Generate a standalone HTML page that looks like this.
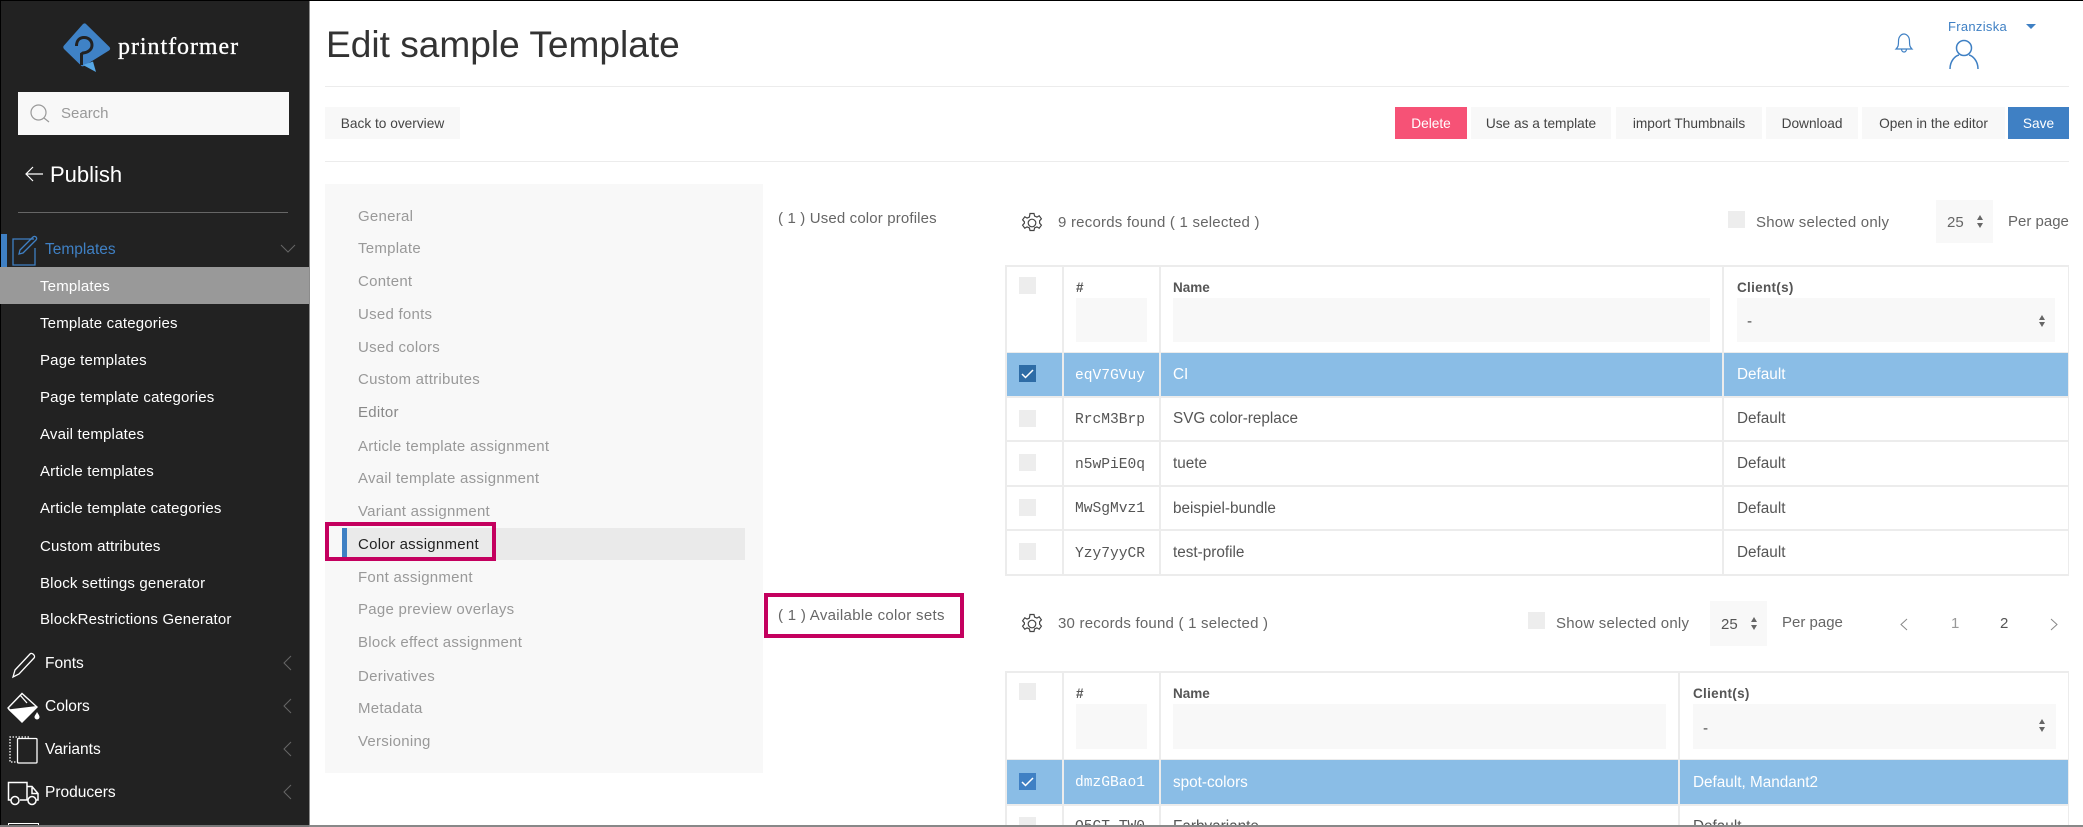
<!DOCTYPE html>
<html><head><meta charset="utf-8"><title>Edit sample Template</title>
<style>
html,body{margin:0;padding:0;background:#fff}
#p{position:relative;width:2083px;height:827px;overflow:hidden;background:#fff;font-family:"Liberation Sans",sans-serif;color:#555}
#p div,#p svg{position:absolute}
.t{white-space:nowrap;line-height:20px;height:20px;margin-top:1px}
.s{color:#fff;font-size:15px;left:40px;letter-spacing:.18px}
.m{color:#fff;font-size:15.5px;left:45px}
.n{color:#999;font-size:15px;left:358px;letter-spacing:.26px}
.b{top:107px;height:32px;line-height:34px;background:#f8f8f8;color:#444;font-size:13.7px;text-align:center;white-space:nowrap}
.l{background:#ececec}
.cb{width:17px;height:17px;background:#ededed}
.mono{font-family:"Liberation Mono",monospace;font-size:14.6px;color:#555}
.c{font-size:15.3px;color:#555}
.h{font-size:13.5px;font-weight:bold;color:#555}
.f{background:#f8f8f8}
.w{color:#fff}
.sel{background:#8abde6}
#p .n,#p .s,#p .c,#p .mono,#p .h,#p .k{margin-top:2px}
</style></head><body><div id="p">

<!-- sidebar -->
<div style="left:0;top:0;width:309px;height:827px;background:#222"></div>
<div style="left:0;top:0;width:1px;height:827px;background:#000"></div>
<div style="left:309px;top:0;width:1px;height:825px;background:#8c8c8c"></div>
<svg style="left:60px;top:20px" width="55" height="55" viewBox="60 20 55 55">
<path d="M84 23.500 Q85 23 86 24 L109.500 47 Q111 49 109 50.500 L84 66 Q82 67 81 65.500 L64 49 Q62.500 47 64 45.500 L83 24 Z" fill="#3f82c6"/>
<path d="M83 65 L93 61.500 L96 72 Z" fill="#56a7e6"/>
<path d="M76.500 46 C76.500 40 80 37.500 84 37.500 C89.500 37.500 92 41.500 92 45 C92 50 87.500 52.500 83 53 L81.500 54 V65" fill="none" stroke="#222" stroke-width="3"/>
</svg>
<div class="t" style="left:118px;top:33px;height:26px;line-height:26px;font-family:'Liberation Serif',serif;font-size:24px;color:#fff;letter-spacing:.95px;-webkit-text-stroke:.3px #fff">printformer</div>
<div style="left:18px;top:92px;width:271px;height:43px;background:#f8f8f8"></div>
<svg style="left:28px;top:102px" width="24" height="24" viewBox="0 0 24 24" fill="none" stroke="#999" stroke-width="1.2"><circle cx="10.500" cy="10.500" r="7.500"/><path d="M16 16l5 4"/></svg>
<div class="t" style="left:61px;top:103px;font-size:15px;color:#999">Search</div>
<svg style="left:24px;top:163px" width="22" height="22" viewBox="0 0 22 22" fill="none" stroke="#fff" stroke-width="1.2"><path d="M19 11H2M9 4l-7 7 7 7"/></svg>
<div class="t" style="left:50px;top:164px;font-size:22px;color:#fff;line-height:20px">Publish</div>
<div style="left:18px;top:212px;width:270px;height:1px;background:#666"></div>

<div style="left:1px;top:234px;width:6px;height:33px;background:#3f80c4"></div>
<svg style="left:11px;top:234px" width="30" height="33" viewBox="0 0 30 33" fill="none" stroke="#3f80c4" stroke-width="1.3"><path d="M23 5H2v26h22V14"/><path d="M8 20l1-4L22 3c2-2 5 1 3 3L12 19z"/></svg>
<div class="t" style="left:45px;top:239px;color:#3f80c4;font-size:15.500px">Templates</div>
<svg style="left:280px;top:244px" width="16" height="10" viewBox="0 0 16 10" fill="none" stroke="#666" stroke-width="1"><path d="M1 1l7 7 7-7"/></svg>
<div style="left:0;top:267px;width:309px;height:37px;background:#999"></div>
<div class="t s" style="top:275px">Templates</div>
<div class="t s" style="top:312px">Template categories</div>
<div class="t s" style="top:349px">Page templates</div>
<div class="t s" style="top:386px">Page template categories</div>
<div class="t s" style="top:423px">Avail templates</div>
<div class="t s" style="top:460px">Article templates</div>
<div class="t s" style="top:497px">Article template categories</div>
<div class="t s" style="top:535px">Custom attributes</div>
<div class="t s" style="top:572px">Block settings generator</div>
<div class="t s" style="top:608px">BlockRestrictions Generator</div>

<svg style="left:10px;top:651px" width="28" height="28" viewBox="0 0 28 28" fill="none" stroke="#fff" stroke-width="1.3"><path d="M3 26l2-7L20 3c2-2 6 2 4 4L9 23z"/></svg>
<div class="t m" style="top:653px">Fonts</div>
<svg style="left:6px;top:691px" width="36" height="34" viewBox="0 0 36 34"><path d="M2 17L16 2.500 31 16 16 31z" fill="none" stroke="#fff" stroke-width="1.400"/><path d="M2 18.500L31 15 16 31.500z" fill="#fff"/><path d="M14 4l7 8" stroke="#fff" stroke-width="1.300"/><path d="M31 21c1.500 2.500 2.500 3.500 2.500 5a2.500 2.500 0 0 1-5 0c0-1.500 1.500-2.500 2.500-5z" fill="#fff"/></svg>
<div class="t m" style="top:696px">Colors</div>
<svg style="left:8px;top:735px" width="32" height="31" viewBox="0 0 32 31" fill="none" stroke="#fff" stroke-width="1.300"><rect x="9.500" y="3.500" width="19.500" height="24.500" rx="1"/><path d="M21 2H2v25h7.500" stroke-dasharray="1.500 1.500"/></svg>
<div class="t m" style="top:739px">Variants</div>
<svg style="left:7px;top:780px" width="34" height="27" viewBox="0 0 34 27" fill="none" stroke="#fff" stroke-width="1.500"><path d="M3.500 20H1.500V2.500h18.500V20h-7M20 6.500h5l6 7V20h-2M20 20h1M25 7.500v6h6"/><circle cx="8" cy="20.500" r="4"/><circle cx="25" cy="20.500" r="4"/></svg>
<div class="t m" style="top:782px">Producers</div>
<svg style="left:283px;top:655px" width="10" height="150" viewBox="0 0 10 150" fill="none" stroke="#666" stroke-width="1"><path d="M8 1L1 8l7 7M8 44l-7 7 7 7M8 87l-7 7 7 7M8 130l-7 7 7 7"/></svg>
<div style="left:8px;top:823px;width:31px;height:4px;border:1px solid #fff;box-sizing:border-box"></div>

<!-- top -->
<div style="left:0;top:0;width:2083px;height:1px;background:#000"></div>
<div class="t" style="left:326px;top:23px;height:40px;line-height:40px;font-size:37.100px;color:#333">Edit sample Template</div>
<div class="t k" style="left:1948px;top:15px;font-size:13px;color:#3f80c4;letter-spacing:.3px">Franziska</div>
<div style="left:2026px;top:24px;width:0;height:0;border-left:5px solid transparent;border-right:5px solid transparent;border-top:5px solid #3f80c4"></div>
<svg style="left:1894px;top:32px" width="20" height="22" viewBox="0 0 20 22" fill="none" stroke="#3f80c4" stroke-width="1.200"><path d="M2 17c2-2 2.500-3 2.500-8 0-4 2.500-7 5.500-7s5.500 3 5.500 7c0 5 .5 6 2.500 8zM7.500 17c0 4 5 4 5 0"/></svg>
<svg style="left:1948px;top:39px" width="32" height="31" viewBox="0 0 32 31" fill="none" stroke="#3f80c4" stroke-width="1.500"><circle cx="16" cy="9" r="7.500"/><path d="M2 30c0-8 5-13 9-14M30 30c0-8-5-13-9-14"/></svg>
<div class="l" style="left:325px;top:86px;width:1744px;height:1px"></div>
<div class="l" style="left:325px;top:161px;width:1744px;height:1px"></div>

<div class="b" style="left:325px;width:135px">Back to overview</div>
<div class="b" style="left:1395px;width:72px;background:#f65276;color:#fff">Delete</div>
<div class="b" style="left:1471px;width:140px">Use as a template</div>
<div class="b" style="left:1616px;width:146px">import Thumbnails</div>
<div class="b" style="left:1766px;width:92px">Download</div>
<div class="b" style="left:1862px;width:143px">Open in the editor</div>
<div class="b" style="left:2008px;width:61px;background:#3f80c4;color:#fff">Save</div>

<!-- left panel -->
<div style="left:325px;top:184px;width:438px;height:589px;background:#f8f8f8"></div>
<div style="left:342px;top:528px;width:403px;height:32px;background:#eaeaea"></div>
<div style="left:342px;top:528px;width:5px;height:32px;background:#3f80c4"></div>
<div style="left:325px;top:522px;width:171px;height:39px;border:4px solid #c4005f;box-sizing:border-box"></div>
<div class="t n" style="top:205px">General</div>
<div class="t n" style="top:237px">Template</div>
<div class="t n" style="top:270px">Content</div>
<div class="t n" style="top:303px">Used fonts</div>
<div class="t n" style="top:336px">Used colors</div>
<div class="t n" style="top:368px">Custom attributes</div>
<div class="t n" style="top:401px;color:#888">Editor</div>
<div class="t n" style="top:435px">Article template assignment</div>
<div class="t n" style="top:467px">Avail template assignment</div>
<div class="t n" style="top:500px">Variant assignment</div>
<div class="t n" style="top:533px;color:#222">Color assignment</div>
<div class="t n" style="top:566px">Font assignment</div>
<div class="t n" style="top:598px">Page preview overlays</div>
<div class="t n" style="top:631px">Block effect assignment</div>
<div class="t n" style="top:665px">Derivatives</div>
<div class="t n" style="top:697px">Metadata</div>
<div class="t n" style="top:730px">Versioning</div>

<!-- middle labels -->
<div class="t k" style="left:778px;top:207px;font-size:15px;color:#666;letter-spacing:.15px">( 1 ) Used color profiles</div>
<div style="left:764px;top:593px;width:200px;height:45px;border:4px solid #c4005f;box-sizing:border-box"></div>
<div class="t k" style="left:778px;top:604px;font-size:15px;color:#666;letter-spacing:.3px">( 1 ) Available color sets</div>

<!-- section 1 toolbar -->
<svg style="left:1021px;top:212px" width="22" height="22" viewBox="0 0 22 22" fill="none" stroke="#444" stroke-width="1.200"><circle cx="11" cy="11" r="3.800"/><path d="M9 1.500h4l.6 2.600 2.300 1 2.300-1.300 2.200 3-1.800 2 0 2.400 1.800 2-2.200 3-2.300-1.300-2.300 1-.6 2.600H9l-.6-2.600-2.300-1-2.300 1.300-2.200-3 1.800-2V9.800l-1.800-2 2.200-3 2.300 1.300 2.300-1z"/></svg>
<div class="t k" style="left:1058px;top:211px;font-size:15px;color:#666;letter-spacing:.22px">9 records found ( 1 selected )</div>
<div class="cb" style="left:1728px;top:211px"></div>
<div class="t k" style="left:1756px;top:211px;font-size:15px;color:#666;letter-spacing:.22px">Show selected only</div>
<div class="f" style="left:1936px;top:200px;width:57px;height:43px"></div>
<div class="t k" style="left:1947px;top:211px;font-size:15px;color:#666">25</div>
<div style="left:1977px;top:215px;width:0;height:0;border-left:3.500px solid transparent;border-right:3.500px solid transparent;border-bottom:5px solid #666"></div>
<div style="left:1977px;top:223px;width:0;height:0;border-left:3.500px solid transparent;border-right:3.500px solid transparent;border-top:5px solid #666"></div>
<div class="t k" style="left:2008px;top:210px;font-size:15px;color:#666">Per page</div>

<!-- table 1 -->
<div style="left:1006px;top:353px;width:1062px;height:43px" class="sel"></div>
<div class="l" style="left:1005px;top:265px;width:1064px;height:2px"></div>
<div class="l" style="left:1005px;top:396px;width:1064px;height:2px"></div>
<div class="l" style="left:1005px;top:440px;width:1064px;height:2px"></div>
<div class="l" style="left:1005px;top:485px;width:1064px;height:2px"></div>
<div class="l" style="left:1005px;top:529px;width:1064px;height:2px"></div>
<div class="l" style="left:1005px;top:574px;width:1064px;height:2px"></div>
<div class="l" style="left:1005px;top:352px;width:1064px;height:1px"></div>
<div class="l" style="left:1005px;top:265px;width:2px;height:311px"></div>
<div class="l" style="left:1062px;top:265px;width:2px;height:311px"></div>
<div class="l" style="left:1159px;top:265px;width:2px;height:311px"></div>
<div class="l" style="left:1722px;top:265px;width:2px;height:311px"></div>
<div class="l" style="left:2068px;top:265px;width:1px;height:311px"></div>
<div class="cb" style="left:1019px;top:277px"></div>
<div class="t h" style="left:1076px;top:276px">#</div>
<div class="t h" style="left:1173px;top:276px">Name</div>
<div class="t h" style="left:1737px;top:276px;letter-spacing:.3px">Client(s)</div>
<div class="f" style="left:1076px;top:298px;width:71px;height:44px"></div>
<div class="f" style="left:1173px;top:298px;width:537px;height:44px"></div>
<div class="f" style="left:1737px;top:298px;width:318px;height:44px"></div>
<div class="t c" style="left:1747px;top:310px">-</div>
<div style="left:2039px;top:315px;width:0;height:0;border-left:3.500px solid transparent;border-right:3.500px solid transparent;border-bottom:5px solid #666"></div>
<div style="left:2039px;top:322px;width:0;height:0;border-left:3.500px solid transparent;border-right:3.500px solid transparent;border-top:5px solid #666"></div>

<div class="cb" style="left:1019px;top:365px;background:#2e6ca6"></div>
<svg style="left:1019px;top:365px" width="17" height="17" viewBox="0 0 17 17" fill="none" stroke="#fff" stroke-width="1.500"><path d="M3 9l3.500 3.500L14 5"/></svg>
<div class="t mono w" style="left:1075px;top:364px;color:#fff">eqV7GVuy</div>
<div class="t c" style="left:1173px;top:363px;color:#fff">CI</div>
<div class="t c" style="left:1737px;top:363px;color:#fff">Default</div>

<div class="cb" style="left:1019px;top:410px"></div>
<div class="t mono" style="left:1075px;top:408px">RrcM3Brp</div>
<div class="t c" style="left:1173px;top:407px">SVG color-replace</div>
<div class="t c" style="left:1737px;top:407px">Default</div>

<div class="cb" style="left:1019px;top:454px"></div>
<div class="t mono" style="left:1075px;top:453px">n5wPiE0q</div>
<div class="t c" style="left:1173px;top:452px">tuete</div>
<div class="t c" style="left:1737px;top:452px">Default</div>

<div class="cb" style="left:1019px;top:499px"></div>
<div class="t mono" style="left:1075px;top:497px">MwSgMvz1</div>
<div class="t c" style="left:1173px;top:497px">beispiel-bundle</div>
<div class="t c" style="left:1737px;top:497px">Default</div>

<div class="cb" style="left:1019px;top:543px"></div>
<div class="t mono" style="left:1075px;top:542px">Yzy7yyCR</div>
<div class="t c" style="left:1173px;top:541px">test-profile</div>
<div class="t c" style="left:1737px;top:541px">Default</div>

<!-- section 2 toolbar -->
<svg style="left:1021px;top:613px" width="22" height="22" viewBox="0 0 22 22" fill="none" stroke="#444" stroke-width="1.200"><circle cx="11" cy="11" r="3.800"/><path d="M9 1.500h4l.6 2.600 2.300 1 2.300-1.300 2.200 3-1.800 2 0 2.400 1.800 2-2.200 3-2.300-1.300-2.300 1-.6 2.600H9l-.6-2.600-2.300-1-2.300 1.300-2.200-3 1.800-2V9.800l-1.800-2 2.200-3 2.300 1.300 2.300-1z"/></svg>
<div class="t k" style="left:1058px;top:612px;font-size:15px;color:#666;letter-spacing:.22px">30 records found ( 1 selected )</div>
<div class="cb" style="left:1528px;top:612px"></div>
<div class="t k" style="left:1556px;top:612px;font-size:15px;color:#666;letter-spacing:.22px">Show selected only</div>
<div class="f" style="left:1710px;top:601px;width:57px;height:45px"></div>
<div class="t k" style="left:1721px;top:613px;font-size:15px;color:#555">25</div>
<div style="left:1751px;top:617px;width:0;height:0;border-left:3.500px solid transparent;border-right:3.500px solid transparent;border-bottom:5px solid #666"></div>
<div style="left:1751px;top:625px;width:0;height:0;border-left:3.500px solid transparent;border-right:3.500px solid transparent;border-top:5px solid #666"></div>
<div class="t k" style="left:1782px;top:611px;font-size:15px;color:#666">Per page</div>
<svg style="left:1899px;top:618px" width="10" height="13" viewBox="0 0 10 13" fill="none" stroke="#888" stroke-width="1"><path d="M8 1L2 6.500 8 12"/></svg>
<div class="t k" style="left:1951px;top:612px;font-size:15px;color:#999">1</div>
<div class="t k" style="left:2000px;top:612px;font-size:15px;color:#555">2</div>
<svg style="left:2049px;top:618px" width="10" height="13" viewBox="0 0 10 13" fill="none" stroke="#888" stroke-width="1"><path d="M2 1l6 5.500L2 12"/></svg>

<!-- table 2 -->
<div style="left:1006px;top:760px;width:1062px;height:44px" class="sel"></div>
<div class="l" style="left:1005px;top:671px;width:1064px;height:2px"></div>
<div class="l" style="left:1005px;top:759px;width:1064px;height:1px"></div>
<div class="l" style="left:1005px;top:804px;width:1064px;height:2px"></div>
<div class="l" style="left:1005px;top:671px;width:2px;height:156px"></div>
<div class="l" style="left:1062px;top:671px;width:2px;height:156px"></div>
<div class="l" style="left:1159px;top:671px;width:2px;height:156px"></div>
<div class="l" style="left:1678px;top:671px;width:2px;height:156px"></div>
<div class="l" style="left:2068px;top:671px;width:1px;height:156px"></div>
<div class="cb" style="left:1019px;top:683px"></div>
<div class="t h" style="left:1076px;top:682px">#</div>
<div class="t h" style="left:1173px;top:682px">Name</div>
<div class="t h" style="left:1693px;top:682px;letter-spacing:.3px">Client(s)</div>
<div class="f" style="left:1076px;top:704px;width:71px;height:45px"></div>
<div class="f" style="left:1173px;top:704px;width:493px;height:45px"></div>
<div class="f" style="left:1693px;top:704px;width:363px;height:45px"></div>
<div class="t c" style="left:1703px;top:717px">-</div>
<div style="left:2039px;top:719px;width:0;height:0;border-left:3.500px solid transparent;border-right:3.500px solid transparent;border-bottom:5px solid #666"></div>
<div style="left:2039px;top:727px;width:0;height:0;border-left:3.500px solid transparent;border-right:3.500px solid transparent;border-top:5px solid #666"></div>
<div class="cb" style="left:1019px;top:773px;background:#3f80c4"></div>
<svg style="left:1019px;top:773px" width="17" height="17" viewBox="0 0 17 17" fill="none" stroke="#fff" stroke-width="1.500"><path d="M3 9l3.500 3.500L14 5"/></svg>
<div class="t mono" style="left:1075px;top:771px;color:#fff">dmzGBao1</div>
<div class="t c" style="left:1173px;top:771px;color:#fff">spot-colors</div>
<div class="t c" style="left:1693px;top:771px;color:#fff">Default, Mandant2</div>
<div class="cb" style="left:1019px;top:817px"></div>
<div class="t mono" style="left:1075px;top:815px">Q5GT_TW0</div>
<div class="t c" style="left:1173px;top:815px">Farbvariante</div>
<div class="t c" style="left:1693px;top:815px">Default</div>

<!-- bottom rule -->
<div style="left:309px;top:825px;width:1774px;height:2px;background:#888"></div>
<div style="left:0;top:825px;width:309px;height:2px;background:#777"></div>
</div></body></html>
